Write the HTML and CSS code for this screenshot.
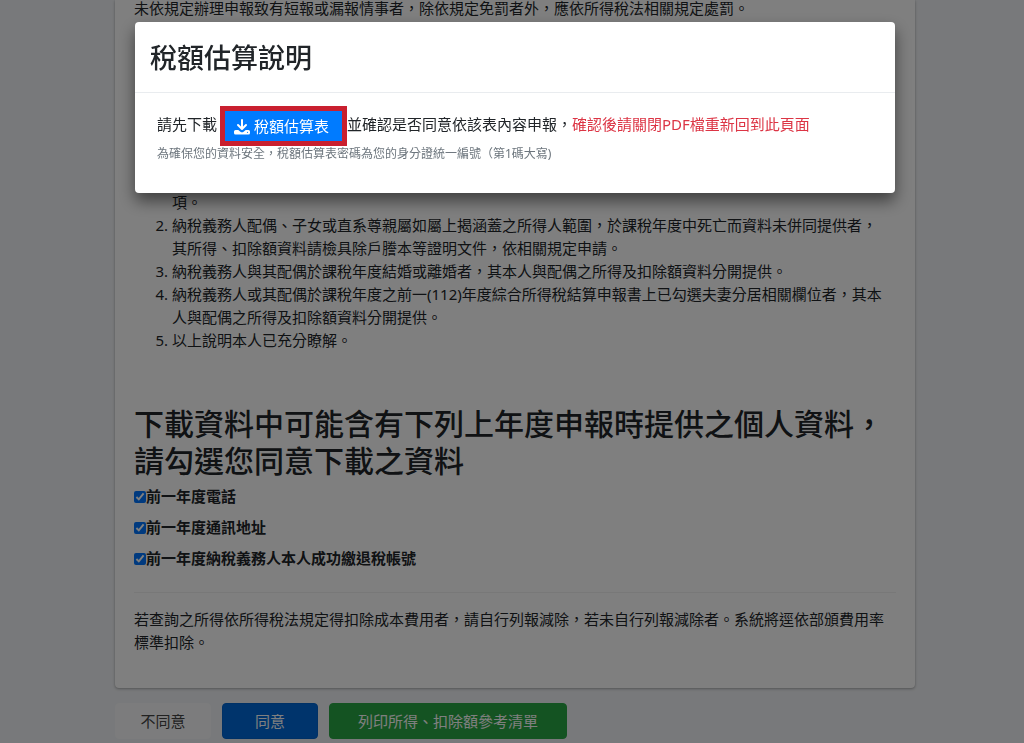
FILE: index.html
```html
<!DOCTYPE html>
<html lang="zh-Hant">
<head>
<meta charset="utf-8">
<meta name="viewport" content="width=device-width, initial-scale=1">
<title>稅額估算說明</title>
<link rel="stylesheet" href="styles.css">
</head>
<body>
<main class="page">
  <section class="card">
    <p class="notice">未依規定辦理申報致有短報或漏報情事者，除依規定免罰者外，應依所得稅法相關規定處罰。</p>
    <ol class="terms">
      <li class="terms-continued">項。</li>
      <li>納稅義務人配偶、子女或直系尊親屬如屬上揭涵蓋之所得人範圍，於課稅年度中死亡而資料未併同提供者，其所得、扣除額資料請檢具除戶謄本等證明文件，依相關規定申請。</li>
      <li>納稅義務人與其配偶於課稅年度結婚或離婚者，其本人與配偶之所得及扣除額資料分開提供。</li>
      <li>納稅義務人或其配偶於課稅年度之前一(112)年度綜合所得稅結算申報書上已勾選夫妻分居相關欄位者，其本人與配偶之所得及扣除額資料分開提供。</li>
      <li>以上說明本人已充分瞭解。</li>
    </ol>
    <h2 class="heading">下載資料中可能含有下列上年度申報時提供之個人資料，請勾選您同意下載之資料</h2>
    <div class="options">
      <label class="option"><input class="check" type="checkbox" checked>前一年度電話</label>
      <label class="option"><input class="check" type="checkbox" checked>前一年度通訊地址</label>
      <label class="option"><input class="check" type="checkbox" checked>前一年度納稅義務人本人成功繳退稅帳號</label>
    </div>
    <hr class="rule">
    <p class="footnote">若查詢之所得依所得稅法規定得扣除成本費用者，請自行列報減除，若未自行列報減除者。系統將逕依部頒費用率標準扣除。</p>
  </section>
  <div class="actions">
    <button class="btn btn-light" type="button">不同意</button>
    <button class="btn btn-primary" type="button">同意</button>
    <button class="btn btn-success" type="button">列印所得、扣除額參考清單</button>
  </div>
</main>

<div class="backdrop">
  <div class="modal" role="dialog" aria-modal="true" aria-labelledby="modal-title">
    <header class="modal-header">
      <h1 class="modal-title" id="modal-title">稅額估算說明</h1>
    </header>
    <div class="modal-body">
      <div class="instruction">
        <span>請先下載</span>
        <span class="highlight">
          <button class="download" type="button">
            <svg class="download-icon" viewBox="0 0 16 16" aria-hidden="true">
              <path d="M8 1v8M4 6l4 4 4-4" fill="none" stroke="currentColor" stroke-width="2" stroke-linecap="round" stroke-linejoin="round"/>
              <path d="M1.500 11H4.300L6.400 12.800Q8 13.900 9.600 12.800L11.700 11H14.500Q16 11 16 12.500V14Q16 15.500 14.500 15.500H1.500Q0 15.500 0 14V12.500Q0 11 1.500 11Z" fill="currentColor"/>
              <circle cx="13.500" cy="13.300" r=".6" fill="#007bff"/>
            </svg>
            稅額估算表
          </button>
        </span>
        <span>並確認是否同意依該表內容申報，<span class="warning">確認後請關閉PDF檔重新回到此頁面</span></span>
      </div>
      <small class="hint">為確保您的資料安全，稅額估算表密碼為您的身分證統一編號（第1碼大寫)</small>
    </div>
  </div>
</div>
</body>
</html>
```
FILE: styles.css
```css
* { box-sizing: border-box; }

body {
  margin: 0;
  background: #f1f3f6;
  color: #212529;
  font-family: "Noto Sans", "Noto Sans CJK TC", sans-serif;
  font-size: 15px;
  line-height: 23px;
  overflow: hidden;
}

button { font: inherit; }

.page { padding: 0 109px 0 115px; }

.card {
  padding: 0 19px 34px;
  background: #fff;
  border-radius: 0 0 4px 4px;
  box-shadow: 0 0 1px rgba(0, 0, 0, .13), 0 1px 3px rgba(0, 0, 0, .3);
}

.notice {
  margin: 0 0 175px;
  line-height: 16px;
}

.terms {
  margin: 0 0 53px;
  padding: 0 12px 0 38px;
}

.terms-continued { list-style: none; }

.heading {
  margin: 0 0 6px;
  font-size: 30px;
  font-weight: 500;
  line-height: 37px;
}

.options {
  display: flex;
  flex-direction: column;
  align-items: flex-start;
  gap: 8px;
}

.option {
  display: flex;
  align-items: center;
  font-weight: 700;
}

.check {
  width: 12px;
  height: 12px;
  margin: 0;
  accent-color: #0075ff;
}

.rule {
  margin: 22px 0 15px;
  border: 0;
  border-top: 1px solid rgba(0, 0, 0, .06);
}

.footnote { margin: 0; }

.actions {
  display: flex;
  gap: 11px;
  padding: 15px 0 4px;
}

.btn {
  min-width: 96px;
  padding: 6px 28px;
  border: 1px solid;
  border-radius: 4px;
  line-height: 22px;
  white-space: nowrap;
}

.btn-light { padding: 6px 0; background: #f8f9fa; border-color: #f8f9fa; color: #444; }
.btn-primary { background: #0069d9; border-color: #0062cc; color: #fff; }
.btn-success { background: #28a745; border-color: #28a745; color: #fff; }

.backdrop {
  position: fixed;
  inset: 0;
  padding: 22px 129px 0 135px;
  background: rgba(0, 0, 0, .5);
}

.modal {
  background: #fff;
  border-radius: 4px;
  box-shadow: 0 8px 16px rgba(0, 0, 0, .5);
}

.modal-header {
  padding: 17px 15px 15px;
  border-bottom: 1px solid #e9ecef;
}

.modal-title {
  margin: 0;
  font-size: 27px;
  font-weight: 500;
  line-height: 38px;
}

.modal-body { padding: 13px 22px 31px; }

.instruction {
  display: flex;
  align-items: flex-start;
  line-height: 36px;
}

.highlight {
  display: flex;
  margin-left: 3px;
  border: 5px solid #c9202f;
}

.download {
  display: flex;
  align-items: center;
  gap: 4px;
  padding: 4px 13px 3px 9px;
  border: 0;
  background: #007bff;
  color: #fff;
  line-height: 23px;
}

.download-icon {
  width: 16px;
  height: 16px;
}

.warning { color: #dc3545; }

.hint {
  display: block;
  color: #6c757d;
  font-size: 12px;
  line-height: 16px;
}
```
